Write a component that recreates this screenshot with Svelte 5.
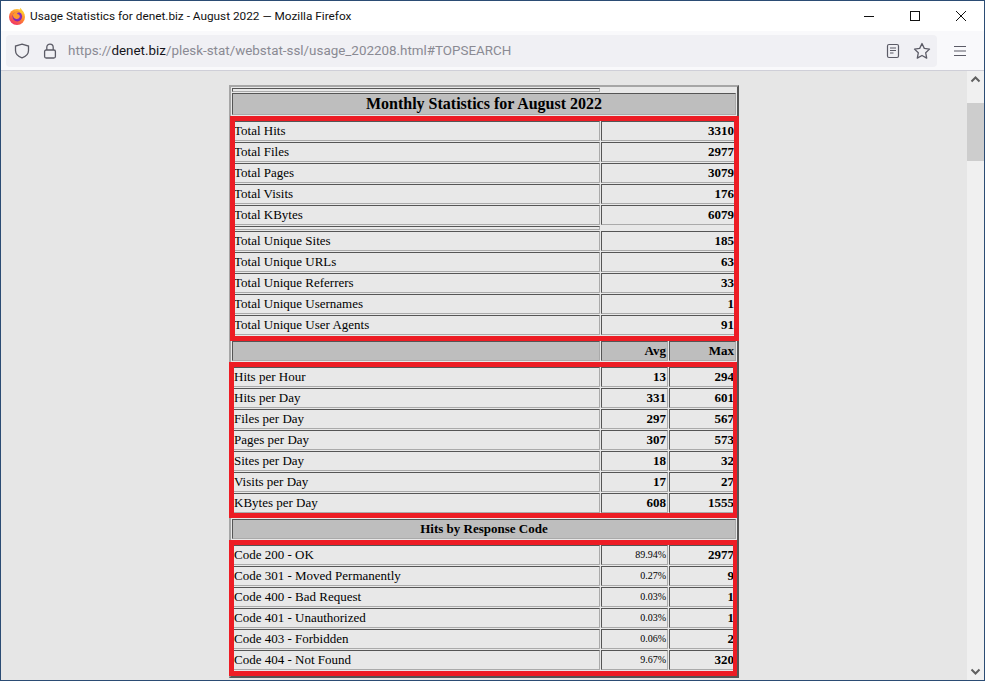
<script>
  const totals1 = [
    ["Total Hits", "3310"],
    ["Total Files", "2977"],
    ["Total Pages", "3079"],
    ["Total Visits", "176"],
    ["Total KBytes", "6079"],
  ];
  const totals2 = [
    ["Total Unique Sites", "185"],
    ["Total Unique URLs", "63"],
    ["Total Unique Referrers", "33"],
    ["Total Unique Usernames", "1"],
    ["Total Unique User Agents", "91"],
  ];
  const perDay = [
    ["Hits per Hour", "13", "294"],
    ["Hits per Day", "331", "601"],
    ["Files per Day", "297", "567"],
    ["Pages per Day", "307", "573"],
    ["Sites per Day", "18", "32"],
    ["Visits per Day", "17", "27"],
    ["KBytes per Day", "608", "1555"],
  ];
  const codes = [
    ["Code 200 - OK", "89.94%", "2977"],
    ["Code 301 - Moved Permanently", "0.27%", "9"],
    ["Code 400 - Bad Request", "0.03%", "1"],
    ["Code 401 - Unauthorized", "0.03%", "1"],
    ["Code 403 - Forbidden", "0.06%", "2"],
    ["Code 404 - Not Found", "9.67%", "320"],
  ];
</script>

<div class="window">
  <header class="titlebar">
    <svg class="fx" width="18" height="18" viewBox="0 0 18 18">
      <defs>
        <linearGradient id="fxOuter" x1="0.8" y1="0" x2="0.2" y2="1">
          <stop offset="0" stop-color="#ffd43a" />
          <stop offset="0.45" stop-color="#ff8a2c" />
          <stop offset="1" stop-color="#f0286e" />
        </linearGradient>
        <radialGradient id="fxInner" cx="0.5" cy="0.45" r="0.6">
          <stop offset="0" stop-color="#7a3fe0" />
          <stop offset="1" stop-color="#8a1fa8" />
        </radialGradient>
      </defs>
      <circle cx="9" cy="10" r="8" fill="url(#fxOuter)" />
      <path d="M12 0.8c1.6 1.6 3.6 4 4.4 6.6L12.5 6z" fill="#ffc72e" />
      <circle cx="9.3" cy="9.6" r="4.8" fill="url(#fxInner)" />
      <path d="M5 7.5c1.4-3 5-4 7.6-2.2-2.2-.3-3.4.5-3.6 1.6 1.6.2 2.8 1 2.8 2.4 0 1.7-1.7 3-3.6 2.7-1.6-.2-3-1.6-3.2-3.2z" fill="#ff9a2e" />
    </svg>
    <span class="title">Usage Statistics for denet.biz - August 2022 — Mozilla Firefox</span>
    <div class="winbtns">
      <svg width="46" height="30" viewBox="0 0 46 30"><path d="M18 15.5h10" stroke="#111" fill="none" /></svg>
      <svg width="46" height="30" viewBox="0 0 46 30"><rect x="18.5" y="10.5" width="9" height="9" stroke="#111" fill="none" /></svg>
      <svg width="46" height="30" viewBox="0 0 46 30"><path d="M18 10l10 10M28 10l-10 10" stroke="#111" fill="none" /></svg>
    </div>
  </header>

  <div class="toolbar">
    <div class="urlbar">
      <svg class="ic shield" width="16" height="16" viewBox="0 0 16 16">
        <path d="M8 1.2 14.5 3v4.5c0 3.6-2.6 6-6.5 7.4C4.1 13.500 1.500 11.100 1.500 7.500V3z" fill="none" stroke="#5b5b66" stroke-width="1.300" />
      </svg>
      <svg class="ic lock" width="16" height="16" viewBox="0 0 16 16">
        <rect x="2.600" y="7" width="10.800" height="8" rx="1.500" fill="none" stroke="#5b5b66" stroke-width="1.300" />
        <path d="M4.800 7V4.300a3.200 3.200 0 0 1 6.400 0V7" fill="none" stroke="#5b5b66" stroke-width="1.300" />
      </svg>
      <span class="url">https://<b>denet.biz</b>/plesk-stat/webstat-ssl/usage_202208.html#TOPSEARCH</span>
      <svg class="ic reader" width="16" height="16" viewBox="0 0 16 16">
        <rect x="2.500" y="1.500" width="11" height="13" rx="1.500" fill="none" stroke="#5b5b66" stroke-width="1.200" />
        <path d="M5 5h6M5 7.500h6M5 10h3.500" stroke="#5b5b66" stroke-width="1.200" fill="none" />
      </svg>
      <svg class="ic star" width="18" height="18" viewBox="0 0 18 18">
        <path d="M9 1.500l2.300 4.900 5.200.7-3.800 3.700 1 5.300L9 13.500l-4.700 2.600 1-5.300L1.500 7.100l5.200-.7z" fill="none" stroke="#5b5b66" stroke-width="1.300" stroke-linejoin="round" />
      </svg>
    </div>
    <svg class="menu" width="14" height="12" viewBox="0 0 14 12">
      <path d="M1 1.500h12M1 6h12M1 10.500h12" stroke="#5b5b66" stroke-width="1.200" fill="none" />
    </svg>
  </div>

  <div class="content">
    <main class="page">
      <div class="stats">
        <table>
          <colgroup><col class="c1" /><col class="c2" /><col class="c3" /></colgroup>
          <tbody>
            <tr><th class="thin"></th></tr>
            <tr><th colspan="3" class="main-head">Monthly Statistics for August 2022</th></tr>
            <tr><th class="thin"></th></tr>
            {#each totals1 as row}
              <tr><td>{row[0]}</td><td colspan="2" class="num">{row[1]}</td></tr>
            {/each}
            <tr><th class="thin"></th></tr>
            {#each totals2 as row}
              <tr><td>{row[0]}</td><td colspan="2" class="num">{row[1]}</td></tr>
            {/each}
            <tr><th class="thin"></th></tr>
            <tr><th></th><th class="right">Avg</th><th class="right">Max</th></tr>
            <tr><th class="thin"></th></tr>
            {#each perDay as row}
              <tr><td>{row[0]}</td><td class="num">{row[1]}</td><td class="num">{row[2]}</td></tr>
            {/each}
            <tr><th class="thin"></th></tr>
            <tr><th colspan="3">Hits by Response Code</th></tr>
            <tr><th class="thin"></th></tr>
            {#each codes as row}
              <tr><td>{row[0]}</td><td class="pct">{row[1]}</td><td class="num">{row[2]}</td></tr>
            {/each}
            <tr><th class="thin"></th></tr>
          </tbody>
        </table>
        <div class="mark one"></div>
        <div class="mark two"></div>
        <div class="mark three"></div>
      </div>
    </main>
    <div class="scrollbar">
      <svg width="17" height="17" viewBox="0 0 17 17"><path d="M4.500 10.500 8.500 6.500l4 4" fill="none" stroke="#606060" stroke-width="2" /></svg>
      <div class="track"><div class="thumb"></div></div>
      <svg width="17" height="17" viewBox="0 0 17 17"><path d="M4.500 6.500l4 4 4-4" fill="none" stroke="#606060" stroke-width="2" /></svg>
    </div>
  </div>
</div>

<style>
  :global(body) {
    margin: 0;
    overflow: hidden;
  }

  .window {
    width: 985px;
    height: 681px;
    box-sizing: border-box;
    border: 1px solid #2b4c74;
    display: flex;
    flex-direction: column;
    overflow: hidden;
    background: #fff;
  }

  .titlebar {
    height: 30px;
    display: flex;
    align-items: center;
    flex: none;
    background: #fff;
  }

  .fx {
    margin-left: 7px;
  }

  .title {
    margin-left: 4px;
    font-family: Roboto, sans-serif;
    font-size: 11.8px;
    color: #111;
    white-space: nowrap;
  }

  .winbtns {
    margin-left: auto;
    display: flex;
  }

  .winbtns svg {
    display: block;
  }

  .toolbar {
    height: 39px;
    flex: none;
    background: #f9f9fb;
    border-bottom: 1px solid #cfcfd8;
    display: flex;
    align-items: center;
    padding-left: 5px;
  }

  .urlbar {
    width: 931px;
    height: 32px;
    background: #f0f0f4;
    border-radius: 4px;
    display: flex;
    align-items: center;
    box-sizing: border-box;
    padding-left: 8px;
  }

  .ic {
    flex: none;
  }

  .lock {
    margin-left: 12px;
  }

  .url {
    margin-left: 10px;
    font-family: Roboto, sans-serif;
    font-size: 13.4px;
    color: #8a8a93;
    white-space: nowrap;
  }

  .url b {
    font-weight: 400;
    color: #15141a;
  }

  .reader {
    margin-left: auto;
  }

  .star {
    margin-left: 12px;
    margin-right: 6px;
  }

  .menu {
    margin-left: 16px;
  }

  .content {
    flex: 1;
    min-height: 0;
    display: flex;
  }

  .page {
    flex: 1;
    background: #e6e6e6;
    overflow: hidden;
    padding-top: 14px;
  }

  .stats {
    position: relative;
    width: 510px;
    margin: 0 auto;
  }

  table {
    width: 510px;
    box-sizing: border-box;
    table-layout: fixed;
    border-collapse: separate;
    border-spacing: 1px;
    border: 2px solid;
    border-color: #a6a6a6 #555 #555 #a6a6a6;
    background: #e8e8e8;
    font-family: "Liberation Serif", "Times New Roman", serif;
    font-size: 13px;
    line-height: 16px;
    color: #000;
  }

  .c1 {
    width: 368px;
  }

  .c2 {
    width: 67px;
  }

  .c3 {
    width: 67px;
  }

  td,
  th {
    box-sizing: border-box;
    padding: 1px;
    border: 1px solid;
    border-color: #555 #aaa #aaa #555;
    overflow: hidden;
    white-space: nowrap;
  }

  td {
    background: #e8e8e8;
    text-align: left;
  }

  th {
    background: #bebebe;
    text-align: center;
    font-weight: 700;
  }

  .main-head {
    font-size: 16px;
    line-height: 18px;
  }

  th.thin {
    height: 4px;
    padding: 0;
    line-height: 0;
    font-size: 0;
    background: #e8e8e8;
  }

  .right,
  .num,
  .pct {
    text-align: right;
  }

  .num {
    font-weight: 700;
  }

  .pct {
    font-size: 10px;
  }

  .mark {
    position: absolute;
    box-sizing: border-box;
    border: 5px solid #ed1c24;
  }

  .one {
    left: 1px;
    top: 31px;
    width: 509px;
    height: 225px;
  }

  .two {
    left: 0;
    top: 277px;
    width: 508px;
    height: 156px;
    border-right-width: 4px;
  }

  .three {
    left: 0;
    top: 455px;
    width: 508px;
    height: 136px;
    border-right-width: 4px;
  }

  .scrollbar {
    width: 17px;
    flex: none;
    background: #f0f0f0;
    display: flex;
    flex-direction: column;
  }

  .scrollbar svg {
    display: block;
    flex: none;
  }

  .track {
    flex: 1;
    padding-top: 15px;
  }

  .thumb {
    height: 58px;
    background: #cdcdcd;
  }
</style>
